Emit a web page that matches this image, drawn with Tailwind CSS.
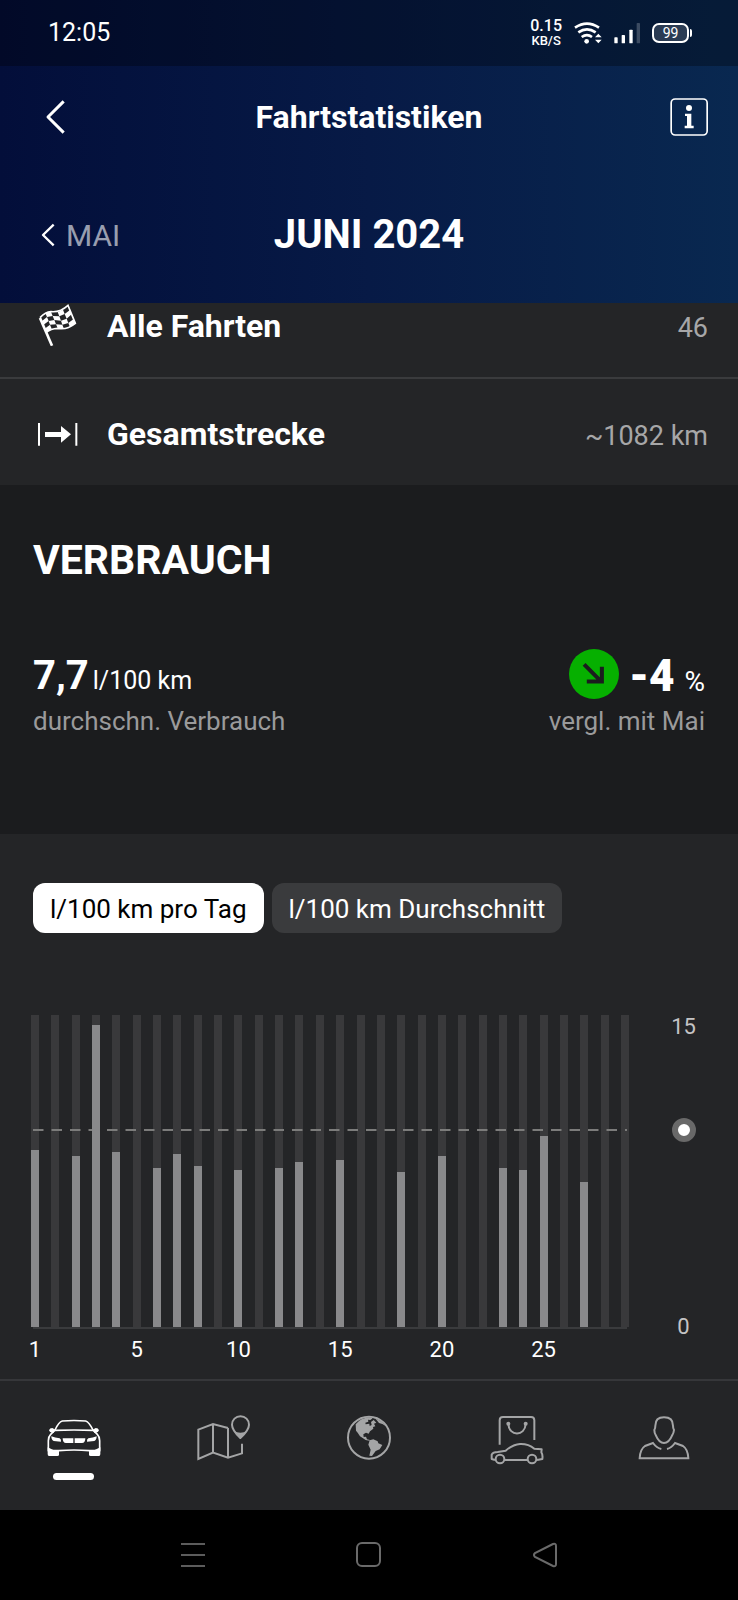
<!DOCTYPE html>
<html lang="de">
<head>
    <meta charset="UTF-8">
    <meta name="viewport" content="width=device-width, initial-scale=1.0">
    <title>Fahrtstatistiken</title>
    <script src="https://cdn.jsdelivr.net/npm/@tailwindcss/browser@4"></script>
</head>
<body class="flex min-h-screen flex-col bg-[#242527] font-[Roboto,sans-serif] text-white">

    <header class="relative z-10 bg-linear-to-r from-[#030e3a] via-[#071a46] to-[#092850]">
        <!-- Status bar -->
        <div class="flex h-[66px] items-center justify-between bg-black/30 pr-[46px] pl-12">
            <span class="text-[25px]">12:05</span>
            <div class="flex items-center gap-3">
                <div class="text-center font-medium">
                    <div class="text-base leading-4">0.15</div>
                    <div class="text-[13px] leading-[14px]">KB/S</div>
                </div>
                <svg class="h-[22px] w-7" viewBox="620 65 84 66" fill="none" stroke="#fff" stroke-width="8">
                    <path d="M623 82 Q659 58 695 82M633 96 Q659 78 685 96M643 110 Q659 99 674 110"/>
                    <circle cx="658" cy="123" r="7" fill="#fff" stroke="none"/>
                    <path d="M693 100 l10 11 h-20zM693 129 l10 -11 h-20z" fill="#fff" stroke="none"/>
                </svg>
                <svg class="h-[22px] w-[26px]" viewBox="734 65 78 66" fill="#fff">
                    <rect x="735" y="111" width="10" height="18" rx="2"/>
                    <rect x="757" y="104" width="10" height="25" rx="2"/>
                    <rect x="780" y="88" width="10" height="41" rx="2"/>
                    <rect x="802" y="68" width="10" height="61" rx="2" fill-opacity=".22"/>
                </svg>
                <div class="flex items-center gap-px">
                    <div class="flex h-5 w-[37px] items-center justify-center rounded-[7px] border-2 border-white bg-white/15 text-sm">99</div>
                    <div class="h-2 w-0.5 rounded-r bg-white"></div>
                </div>
            </div>
        </div>

        <!-- Title -->
        <div class="grid h-[101px] grid-cols-[1fr_auto_1fr] items-center px-[30px]">
            <button class="justify-self-start pl-3.5" aria-label="Zurück">
                <svg class="h-9 w-6" viewBox="132 297 72 108" fill="none" stroke="#fff" stroke-width="9" stroke-linejoin="round">
                    <path d="M191 304 L144 351 L191 398"/>
                </svg>
            </button>
            <h1 class="text-[32px] leading-10 font-bold">Fahrtstatistiken</h1>
            <button class="justify-self-end" aria-label="Info">
                <svg class="size-[38px]" viewBox="905 291 114 114" fill="none" stroke="#fff" stroke-width="5">
                    <rect x="908.500" y="294" width="108" height="108" rx="12"/>
                    <g fill="#fff" stroke="none">
                        <circle cx="962" cy="321" r="9"/>
                        <path d="M950 338 H969 V374 H976 V382 H949 V374 H956 V345 H950z"/>
                    </g>
                </svg>
            </button>
        </div>

        <!-- Month picker -->
        <div class="grid h-[136px] grid-cols-[1fr_auto_1fr] items-center px-10">
            <button class="flex items-center gap-2.5 justify-self-start text-[30px] text-white/60">
                <svg class="h-6 w-4" viewBox="120 668 48 72" fill="none" stroke="#fff" stroke-width="7" stroke-linejoin="round">
                    <path d="M161 673 L129 704 L161 735"/>
                </svg>
                MAI
            </button>
            <h2 class="text-[40px] font-bold">JUNI 2024</h2>
        </div>
    </header>

    <main>
        <!-- First row is partly scrolled under the header -->
        <section class="-mt-8">
            <div class="flex h-[108px] items-center gap-[27px] border-b-2 border-[#3a3b3d] pr-[30px] pl-9">
                <svg class="size-11" viewBox="108 36 132 132" fill="#fff">
                    <path d="M120 84 L156 167" stroke="#fff" stroke-width="8"/>
                    <path d="M120 83 Q136 66 153 65 Q180 68 204 46 L226 100 Q200 121 173 115 Q152 116 139 127" fill="none" stroke="#fff" stroke-width="5"/>
                    <path d="M136 69 L153 65 L158 78 L141 81zM173 66 L189 59 L194 72 L178 79z"/>
                    <path d="M125 94 L141 81 L146 93 L130 105zM158 78 L178 79 L183 92 L163 90zM194 72 L210 60 L215 73 L200 86z"/>
                    <path d="M146 93 L163 90 L168 103 L150 104zM183 92 L200 86 L205 99 L187 104z"/>
                    <path d="M134 116 L150 104 L155 116 L139 127zM168 103 L187 104 L192 117 L173 115zM205 99 L221 87 L226 100 L210 112z"/>
                </svg>
                <span class="pt-1 text-[32px] font-bold">Alle Fahrten</span>
                <span class="ml-auto pt-2 text-[27px] text-[#a7a7a8]">46</span>
            </div>
            <div class="flex h-[106px] items-center gap-[27px] pr-[30px] pl-9">
                <svg class="size-11" viewBox="108 360 132 132" fill="#fff">
                    <path d="M114 399 h6 v68 h-6zM226 399 h6 v68 h-6zM135 426 H183 V408 L213 433 L183 458 V441 H135z"/>
                </svg>
                <span class="pt-1 text-[32px] font-bold">Gesamtstrecke</span>
                <span class="ml-auto pt-2 text-[27px] text-[#a7a7a8]">~1082 km</span>
            </div>
        </section>

        <!-- Consumption -->
        <section class="bg-[#1b1c1e] px-[33px] pt-[50px] pb-[95px]">
            <h2 class="text-[41px] leading-[50px] font-bold">VERBRAUCH</h2>
            <div class="mt-16 flex justify-between">
                <div>
                    <div class="flex h-[50px] items-baseline gap-1 leading-[54px]">
                        <span class="text-[40px] font-bold">7,7</span>
                        <span class="text-[25px]">l/100 km</span>
                    </div>
                    <p class="mt-1 text-[26px] leading-9 text-[#9a9a9b]">durchschn. Verbrauch</p>
                </div>
                <div>
                    <div class="flex h-[50px] items-baseline justify-end gap-2.5 leading-[54px]">
                        <svg class="size-[50px] self-center" viewBox="601 88 149 149">
                            <circle cx="675.500" cy="162.500" r="74.500" fill="#06b000"/>
                            <path d="M646 134 L698 186M654 185 H699 V141" fill="none" stroke="#1b1c1e" stroke-width="12"/>
                        </svg>
                        <span class="text-[44px] font-black">-4</span>
                        <span class="text-[28px]">%</span>
                    </div>
                    <p class="mt-1 text-right text-[26px] leading-9 text-[#9a9a9b]">vergl. mit Mai</p>
                </div>
            </div>
        </section>

        <!-- Daily chart -->
        <section class="pt-[49px] pb-[18px]">
            <div class="flex gap-2 px-[33px]">
                <button class="h-[50px] rounded-xl bg-white px-[17px] pt-0.5 text-[26px] text-black">l/100 km pro Tag</button>
                <button class="h-[50px] rounded-xl bg-[#3a3b3d] px-[17px] pt-0.5 text-[26px]">l/100 km Durchschnitt</button>
            </div>
            <div class="mt-[82px] flex pl-[31px]">
                <div class="flex-1">
                    <div class="relative h-[312px]">
                        <div id="tracks" class="flex h-full justify-between"></div>
                        <svg class="absolute top-[114px] left-0.5 h-0.5 w-full pr-1" fill="none">
                            <line x1="0" y1="1" x2="100%" y2="1" stroke="#7c7c7b" stroke-width="2" stroke-dasharray="10.500 8"/>
                        </svg>
                        <div id="bars" class="absolute inset-0 flex items-end justify-between"></div>
                    </div>
                    <div class="mx-0.5 h-0.5 bg-[#3a3b3d]"></div>
                    <div id="days" class="mt-2 flex h-6 justify-between text-[22px] leading-[26px]"></div>
                </div>
                <div class="relative flex h-[324px] w-[109px] flex-col items-center justify-between text-[22px] leading-6 text-[#c4c4c5]">
                    <span>15</span>
                    <span class="absolute top-[103px] size-6 rounded-full border-6 border-[#696969] bg-white"></span>
                    <span>0</span>
                </div>
            </div>
        </section>
    </main>

    <!-- Tab bar -->
    <nav class="grid h-[131px] grid-cols-5 items-start border-t-2 border-[#36373a] pt-7 text-[#a4a5a6]">
        <a href="#" class="flex flex-col items-center gap-2 text-white" aria-label="Fahrzeug">
            <svg class="size-14" viewBox="138 117 168 168" fill="none" stroke="currentColor" stroke-width="5" stroke-linejoin="round">
                <path d="M165 180 Q176 156 187 153 Q222 150 257 153 Q267 156 279 180"/>
                <path d="M164 181 Q222 179 280 181 L292 193 Q299 200 299 212 V242 L268 242 Q222 238 176 242 L145 242 V212 Q145 200 152 193z"/>
                <g fill="currentColor" stroke="none">
                    <path d="M143 232 L160 240 H177 V254 Q177 258 172 258 H147 Q143 258 143 252zM301 232 L284 240 H267 V254 Q267 258 272 258 H297 Q301 258 301 252z"/>
                    <path d="M147 181 Q149 174 157 174 L166 179 L161 188 Q149 190 147 181zM297 181 Q295 174 287 174 L278 179 L283 188 Q295 190 297 181z"/>
                    <path d="M154 199 Q165 203 179 205 Q184 208 183 215 L161 213 Q154 210 154 199zM290 199 Q279 203 265 205 Q260 208 261 215 L283 213 Q290 210 290 199z"/>
                    <path d="M188 205 H220 V219 H198 Q188 219 188 205zM256 205 H224 V219 H246 Q256 219 256 205z"/>
                </g>
            </svg>
            <span class="h-[7px] w-[41px] rounded-sm bg-white"></span>
        </a>
        <a href="#" class="flex justify-center" aria-label="Karte">
            <svg class="size-14 overflow-visible" viewBox="580 117 168 168" fill="none" stroke="currentColor" stroke-width="6">
                <path d="M685 174 L640 162 L596 179 V267 L640 248 L685 263 L727 250 V221M640 162 V248M685 174 V263"/>
                <path d="M722 204 Q697 180 697 164 A25 25 0 0 1 748 164 Q748 180 722 204z" stroke-linejoin="round"/>
                <path d="M702 183 Q722 193 743 183 L722 207z" fill="currentColor" stroke="none"/>
            </svg>
        </a>
        <a href="#" class="flex justify-center" aria-label="Entdecken">
            <svg class="size-14" viewBox="303 117 168 168" fill="none" stroke="currentColor" stroke-width="6">
                <circle cx="387" cy="203" r="63"/>
                <g fill="currentColor" stroke="none">
                    <path d="M347 163 Q362 144 387 142 L398 145 L391 150 L384 149 L385 155 L376 158 L377 163 L388 161 L389 168 L395 165 L393 156 L401 150 L409 158 L402 161 L406 169 L399 171 L400 176 L390 184 L386 191 L378 188 L370 193 L371 201 L378 200 L381 208 L390 210 L388 212 L377 210 L360 199 L353 188 L348 182z"/>
                    <path d="M389 211 L400 208 L413 214 L415 220 L427 225 L419 238 L407 243 L396 258 L388 257 L392 239 L385 224z"/>
                    <path d="M397 143 Q424 149 436 167 L427 162 L417 159 L408 148z"/>
                </g>
            </svg>
        </a>
        <a href="#" class="flex justify-center" aria-label="Shop">
            <svg class="size-14" viewBox="32 117 168 168" fill="none" stroke="currentColor" stroke-width="6">
                <path d="M64 224 V151 Q64 141 74 141 H158 Q168 141 168 151 V210M90 162 C92 200 140 200 142 162"/>
                <g fill="currentColor" stroke="none"><circle cx="90" cy="161" r="6"/><circle cx="142" cy="161" r="6"/></g>
                <path d="M50 270 L40 267 V254 Q44 246 58 246 L82 242 Q104 223 125 222 Q150 221 168 236 L190 238 L189 247 Q194 255 192 267 L176 270M80 270 H146" stroke-linejoin="round"/>
                <circle cx="65" cy="267" r="13"/>
                <circle cx="161" cy="267" r="13"/>
            </svg>
        </a>
        <a href="#" class="flex justify-center" aria-label="Profil">
            <svg class="size-14" viewBox="475 117 168 168" fill="none" stroke="currentColor" stroke-width="6">
                <path d="M559 142 Q586 142 586 167 Q586 175 589 180 Q588 190 583 197 Q574 219 559 219 Q544 219 535 197 Q530 190 530 180 Q533 175 533 167 Q533 142 559 142z"/>
                <path d="M551 237 Q537 234 526 219 L502 228 Q487 238 486 265 H632 Q631 238 616 228 L592 219 Q581 234 568 237"/>
            </svg>
        </a>
    </nav>

    <!-- Android navigation -->
    <div class="flex h-[90px] items-center justify-center gap-[150px] bg-black">
        <button aria-label="Menü">
            <svg class="size-[26px]" viewBox="0 0 26 26" stroke="#5c5c5c" stroke-width="2"><path d="M1 2 H25M1 13 H25M1 24 H25"/></svg>
        </button>
        <button aria-label="Home">
            <svg class="size-[26px]" viewBox="0 0 26 26" fill="none" stroke="#6a6a6a" stroke-width="2"><rect x="1" y="1" width="23" height="23" rx="5"/></svg>
        </button>
        <button aria-label="Zurück">
            <svg class="size-[26px]" viewBox="0 0 26 26" fill="none" stroke="#6a6a6a" stroke-width="2"><path d="M21 2 L3 11 Q1 13 3 15 L21 24 Q24 25 24 22 V4 Q24 1 21 2z"/></svg>
        </button>
    </div>

    <script>
        // l/100 km per day, 0 = no trip
        const values = [
            8.85, 0, 8.55, 15.1, 8.75, 0, 7.95, 8.65, 8.05, 0,
            7.85, 0, 7.95, 8.25, 0, 8.35, 0, 0, 7.75, 0,
            8.55, 0, 0, 7.95, 7.85, 9.55, 0, 7.25, 0, 0
        ];
        const axisMax = 15.6;

        document.getElementById('tracks').innerHTML = values
            .map(() => '<div class="h-full w-2 bg-[#39393b]"></div>')
            .join('');

        document.getElementById('bars').innerHTML = values
            .map(value => `<div class="w-2 bg-[#89898b]" style="height: ${value / axisMax * 100}%"></div>`)
            .join('');

        document.getElementById('days').innerHTML = values
            .map((value, i) => `<div class="flex w-2 justify-center">${i === 0 ? 1 : i % 5 === 0 ? i : ''}</div>`)
            .join('');
    </script>
</body>
</html>
